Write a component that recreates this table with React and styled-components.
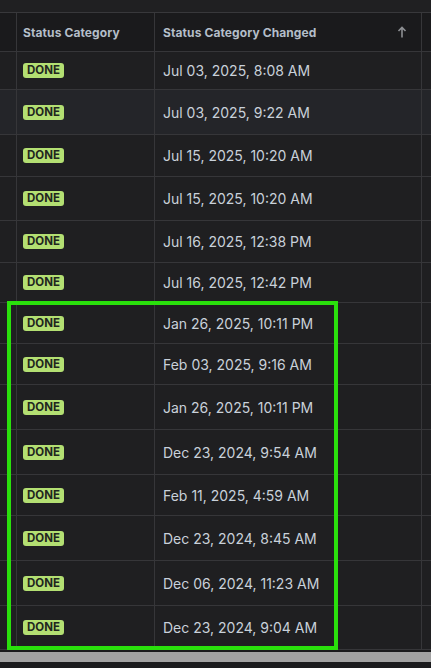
import React from "react";
import styled, { createGlobalStyle } from "styled-components";

const Global = createGlobalStyle`
  html, body { margin: 0; padding: 0; background: #1b1b1d; }
  body { font-family: Inter, "Noto Sans", sans-serif; overflow: hidden; }
  * { box-sizing: border-box; }
`;

const Page = styled.div`
  width: 431px;
  height: 668px;
  overflow: hidden;
  background: #1b1b1d;
  display: flex;
  flex-direction: column;
`;

const TopStrip = styled.div`
  height: 13px;
  flex: none;
  background: #202022;
  border-bottom: 1px solid #38383b;
`;

const Table = styled.div`
  position: relative;
  width: 600px;
  flex: none;
`;

const Row = styled.div`
  display: grid;
  grid-template-columns: 15px 140px 267px 1fr;
  height: ${(p) => p.$h}px;
  background: ${(p) => (p.$header ? "#1a1a1c" : p.$hover ? "#242529" : "#1f1f21")};
`;

const Cell = styled.div`
  display: flex;
  align-items: center;
  padding: 0 8px;
  border-right: 1px solid #363639;
  border-bottom: 1px solid #363639;
  min-width: 0;
  white-space: nowrap;
`;

const HeadLabel = styled.span`
  font-size: 12px;
  font-weight: 700;
  color: #b4bec9;
  letter-spacing: 0.1px;
`;

const HeadCell = styled(Cell)`
  justify-content: space-between;
  padding-right: 14px;
`;

const SortArrow = styled.svg`
  width: 10px;
  height: 12px;
  color: #8d8f93;
`;

const Badge = styled.span`
  display: inline-flex;
  align-items: center;
  height: 15px;
  padding: 0 4px;
  border-radius: 3px;
  background: #b3df72;
  color: #22261e;
  font-size: 11.5px;
  font-weight: 700;
  line-height: 15px;
`;

const DateText = styled.span`
  font-size: 14px;
  color: #c9d1da;
`;

const Highlight = styled.div`
  position: absolute;
  left: 7px;
  top: 288px;
  width: 331px;
  height: 349px;
  border: 4px solid #2ae00c;
  pointer-events: none;
`;

const Gap = styled.div`
  height: 2px;
  flex: none;
`;

const Scrollbar = styled.div`
  height: 10px;
  flex: none;
  background: #a2a2a2;
`;

const rows = [
  ["Jul 03, 2025, 8:08 AM", 38],
  ["Jul 03, 2025, 9:22 AM", 45, true],
  ["Jul 15, 2025, 10:20 AM", 42],
  ["Jul 15, 2025, 10:20 AM", 44],
  ["Jul 16, 2025, 12:38 PM", 42],
  ["Jul 16, 2025, 12:42 PM", 40],
  ["Jan 26, 2025, 10:11 PM", 41],
  ["Feb 03, 2025, 9:16 AM", 41],
  ["Jan 26, 2025, 10:11 PM", 45],
  ["Dec 23, 2024, 9:54 AM", 45],
  ["Feb 11, 2025, 4:59 AM", 41],
  ["Dec 23, 2024, 8:45 AM", 45],
  ["Dec 06, 2024, 11:23 AM", 45],
  ["Dec 23, 2024, 9:04 AM", 44],
];

export default function App() {
  return (
    <Page>
      <Global />
      <TopStrip />
      <Table>
        <Row $h={39} $header>
          <Cell />
          <HeadCell>
            <HeadLabel>Status Category</HeadLabel>
          </HeadCell>
          <HeadCell>
            <HeadLabel>Status Category Changed</HeadLabel>
            <SortArrow viewBox="0 0 10 12" fill="none" stroke="currentColor" strokeWidth="1.6">
              <path d="M5 11.5V1.5M1.5 5L5 1.5L8.5 5" />
            </SortArrow>
          </HeadCell>
          <Cell />
        </Row>
        {rows.map(([d, h, hover], i) => (
          <Row key={i} $h={h} $hover={hover}>
            <Cell />
            <Cell>
              <Badge>DONE</Badge>
            </Cell>
            <Cell>
              <DateText>{d}</DateText>
            </Cell>
            <Cell />
          </Row>
        ))}
        <Highlight />
      </Table>
      <Gap />
      <Scrollbar />
    </Page>
  );
}
